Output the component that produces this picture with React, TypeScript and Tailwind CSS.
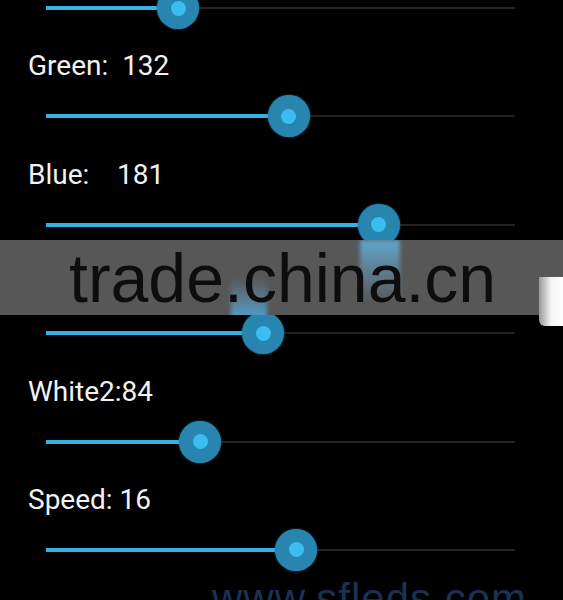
import React from 'react';

type Row = { label: string | null; value: number; max: number; hidden?: boolean };

// slider rows, top one is scrolled off (only its bar shows), 4th label sits under the watermark band
const rows: Row[] = [
    { label: null, value: 72, max: 255 },
    { label: 'Green:  132', value: 132, max: 255 },
    { label: 'Blue:    181', value: 181, max: 255 },
    { label: '', value: 118, max: 255, hidden: true },
    { label: 'White2:84', value: 84, max: 255 },
    { label: 'Speed: 16', value: 16, max: 30 },
];

const SeekBar: React.FC<{ value: number; max: number }> = ({ value, max }) => {
    const pct = (value / max) * 100;
    return (
        <div className="relative ml-[46px] w-[469px] h-[44px] shrink-0">
            <div className="absolute left-0 right-0 top-[21px] h-[2px] bg-[#232323]" />
            <div className="absolute left-0 top-[20px] h-[4px] bg-[#36b1e2]" style={{ width: `${pct}%` }} />
            <div
                className="absolute top-[1px] w-[42px] h-[42px] -ml-[21px] rounded-full bg-[#2785b0] shadow-[0_0_2px_#2785b0] flex items-center justify-center"
                style={{ left: `${pct}%` }}
            >
                <div className="w-[15px] h-[15px] rounded-full bg-[#3bbdf0]" />
            </div>
        </div>
    );
};

const App: React.FC = () => {
    return (
        <div className="relative w-[563px] h-[600px] bg-black overflow-hidden font-['Roboto',_'Noto_Sans',_sans-serif]">
            <div className="flex flex-col mt-[-14px]">
                {rows.map((row, i) => (
                    <div key={i} className="flex flex-col">
                        {row.label !== null && (
                            <div className="mt-[20.4px] h-[32px] leading-[32px] pl-[28px] text-[28px] text-[#f2f2f2] whitespace-pre">
                                {row.hidden ? null : row.label}
                            </div>
                        )}
                        <div className={row.label !== null ? 'mt-[12px]' : ''}>
                            <SeekBar value={row.value} max={row.max} />
                        </div>
                    </div>
                ))}
            </div>

            {/* watermark band */}
            <div className="absolute left-0 right-0 top-[240px] h-[75px] bg-[#575757] overflow-hidden">
                <div className="absolute left-[360px] top-0 w-[40px] h-[62px] bg-gradient-to-b from-[#5fa6cc] to-[#575757] blur-[2px]" />
                <div className="absolute left-[231px] top-[38px] w-[36px] h-[40px] bg-gradient-to-t from-[#4f9fca] to-[#575757] blur-[2px]" />
                <div className="absolute left-[69px] top-[1px] h-[75px] leading-[75px] text-[68px] text-[#0d0d0d] font-['Liberation_Sans',_Arial,_sans-serif] whitespace-nowrap">
                    trade.china.cn
                </div>
            </div>
            <div className="absolute right-0 top-[277px] w-[24px] h-[49px] rounded-bl-[6px] bg-gradient-to-r from-[#9a9a9a] via-[#f4f4f4] to-white" />

            {/* bottom watermark */}
            <div className="absolute left-[212px] top-[575px] leading-[48px] text-[42px] tracking-[1px] text-[#1a3150] font-['Liberation_Sans',_Arial,_sans-serif] whitespace-nowrap">
                www.sfleds.com
            </div>
        </div>
    );
};

export default App;
